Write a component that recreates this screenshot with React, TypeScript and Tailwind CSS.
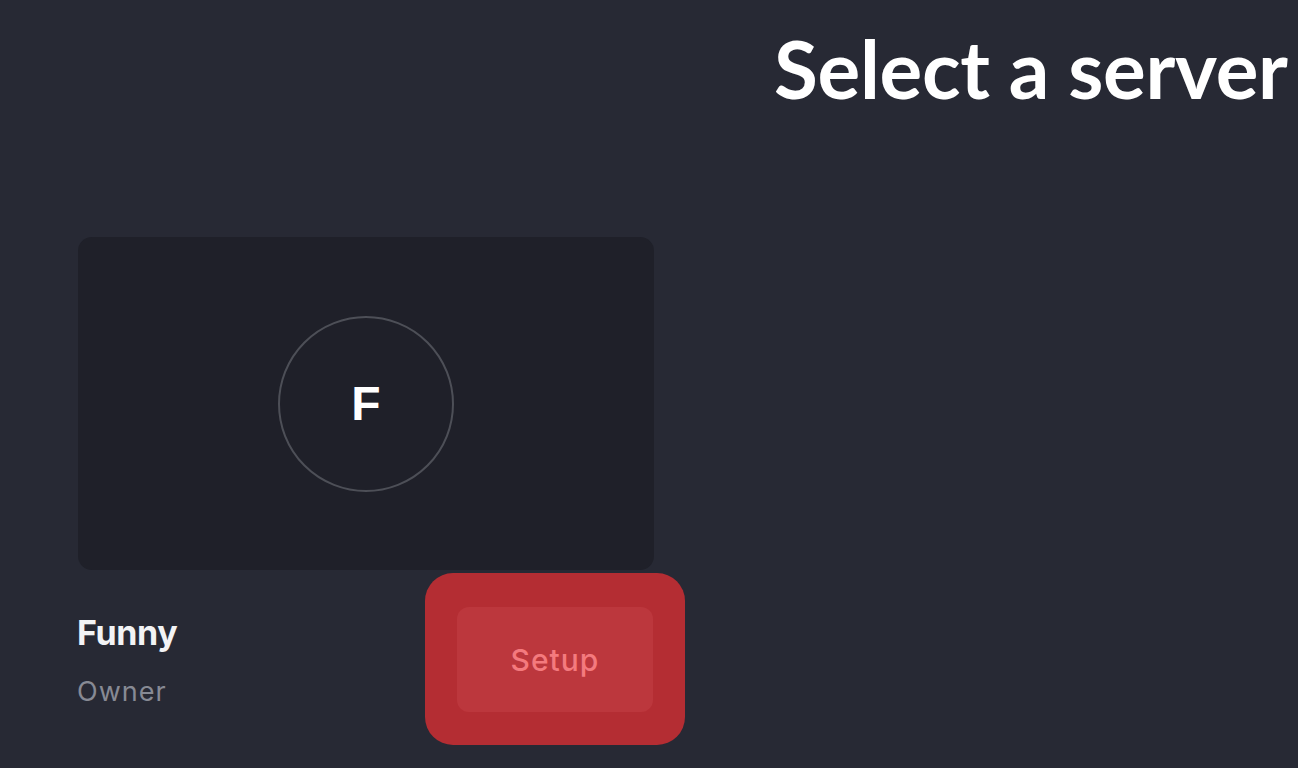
export default function App() {
  return (
    <div
      className="w-[1298px] h-[768px] overflow-hidden bg-[#272934] text-white"
      style={{ fontFamily: "Lato, 'Open Sans', sans-serif" }}
    >
      <div className="pl-[774px] pt-[26px]">
        <h1 className="text-[80px] leading-[84px] font-bold tracking-[-0.3px] whitespace-nowrap">
          Select a server
        </h1>
      </div>

      <div className="pl-[78px] pt-[127px]">
        <div className="w-[576px] h-[333px] rounded-[14px] bg-[#1f2029] flex items-center justify-center">
          <div className="w-[176px] h-[176px] rounded-full border-2 border-[#4d4f57] flex items-center justify-center">
            <span
              className="text-[48px] font-bold leading-none"
              style={{ fontFamily: "'Liberation Sans', Arial, sans-serif" }}
            >
              F
            </span>
          </div>
        </div>

        <div
          className="flex items-start w-[607px] mt-[3px]"
          style={{ fontFamily: "Inter, 'Open Sans', sans-serif" }}
        >
          <div className="flex flex-col pt-[42px] w-[347px]">
            <span className="text-[34px] font-bold leading-[36px] tracking-[-0.4px] -ml-[1px] text-[#f2f3f5]">Funny</span>
            <span className="text-[27px] leading-[30px] mt-[26px] tracking-[1px] -ml-[1px] text-[#878a94]">Owner</span>
          </div>
          <button className="w-[260px] h-[172px] rounded-[28px] bg-[#b42d33] flex items-center justify-center">
            <span className="w-[196px] h-[105px] rounded-[12px] bg-[#bc373d] flex items-center justify-center pt-[3px] text-[30px] font-medium tracking-[1px] text-[#f47a7e]">
              Setup
            </span>
          </button>
        </div>
      </div>
    </div>
  );
}
